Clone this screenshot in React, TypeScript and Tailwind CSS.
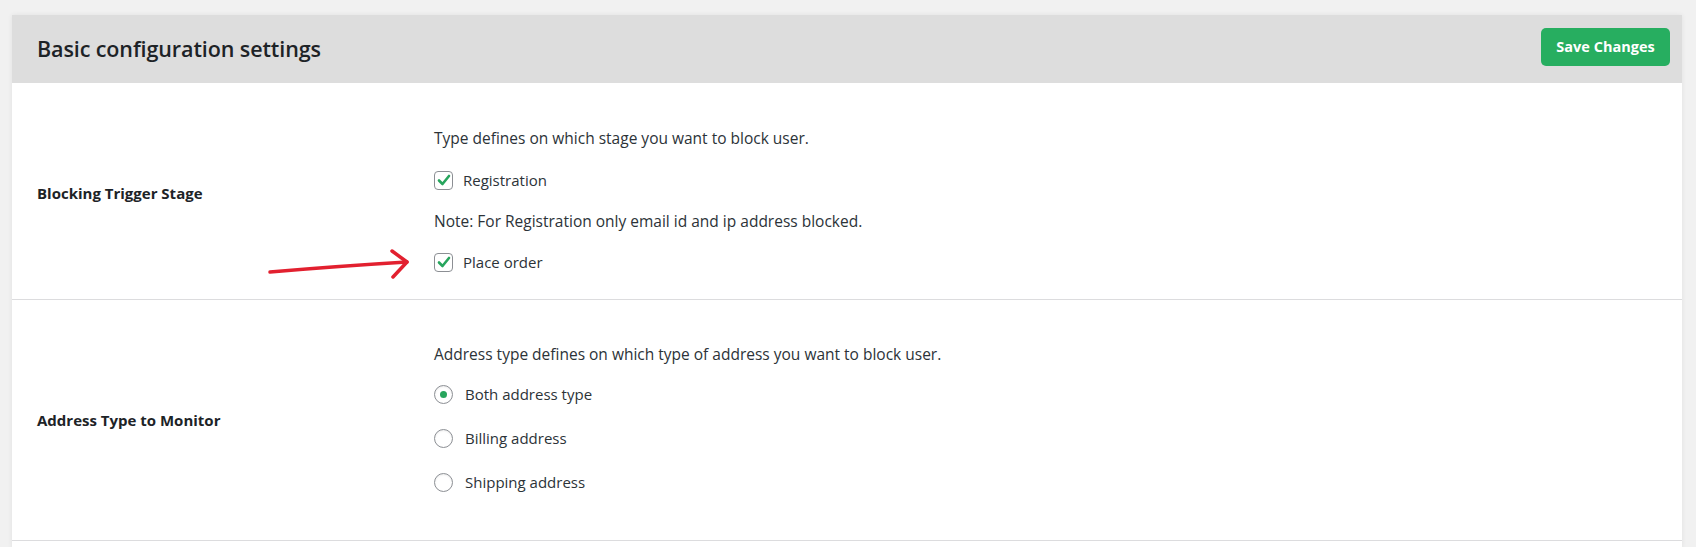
import React from "react";

type Option = { label: string; checked?: boolean };

const font = { fontFamily: '"Open Sans", "Noto Sans", sans-serif' };

function CheckBox({ label, checked }: Option) {
  return (
    <label className="flex items-center h-5 gap-[10px]">
      <span className="w-[19px] h-[19px] rounded-[4px] border border-[#8c8f94] bg-white flex items-center justify-center">
        {checked && (
          <svg width="14" height="14" viewBox="0 0 14 14">
            <path d="M2 7.5 L5.5 11 L12 3" fill="none" stroke="#27a55d" strokeWidth="2.6" strokeLinecap="round" strokeLinejoin="round" />
          </svg>
        )}
      </span>
      <span className="text-[15px] text-[#2c3338]">{label}</span>
    </label>
  );
}

function Radio({ label, checked }: Option) {
  return (
    <label className="flex items-center h-5 gap-[12px]">
      <span className="w-[19px] h-[19px] rounded-full border border-[#8c8f94] bg-white flex items-center justify-center shadow-[inset_0_1px_2px_rgba(0,0,0,0.08)]">
        {checked && <span className="w-[7px] h-[7px] rounded-full bg-[#27a55d]" />}
      </span>
      <span className="text-[15px] text-[#2c3338]">{label}</span>
    </label>
  );
}

// red annotation arrow pointing at "Place order"
function Arrow() {
  return (
    <svg className="absolute left-[248px] top-[161px]" width="160" height="40" viewBox="0 0 160 40">
      <path d="M10 28 Q80 22 147 18" fill="none" stroke="#e2202f" strokeWidth="3.5" strokeLinecap="round" />
      <path d="M132 7 L147 18 L133 33" fill="none" stroke="#e2202f" strokeWidth="3.5" strokeLinecap="round" strokeLinejoin="round" />
    </svg>
  );
}

export default function App() {
  return (
    <div className="min-h-[547px] bg-[#f1f1f1] pt-[15px] pl-[12px] pr-[14px]" style={font}>
      <div className="bg-white shadow-[0_0_5px_rgba(0,0,0,0.07)]">
        {/* header */}
        <div className="h-[68px] bg-[#dddddd] flex items-center justify-between pl-[25px] pr-[12px]">
          <h1 className="text-[21.5px] font-semibold text-[#1d2327] tracking-[-0.1px] mt-[1px]">Basic configuration settings</h1>
          <button className="w-[129px] h-[38px] rounded-[5px] bg-[#27ae60] text-white text-[14.5px] font-bold -mt-[4px]">
            Save Changes
          </button>
        </div>

        {/* row 1 */}
        <div className="relative flex border-b border-[#dcdcde]">
          <div className="w-[422px] pl-[25px] flex items-center shrink-0">
            <span className="text-[15px] font-bold text-[#1d2327] mt-[4px]">Blocking Trigger Stage</span>
          </div>
          <div className="pt-[45px] pb-[27px] flex flex-col gap-[21px] text-[#2c3338]">
            <p className="text-[15.5px] leading-5 mb-[1px]">Type defines on which stage you want to block user.</p>
            <CheckBox label="Registration" checked />
            <p className="text-[15.5px] leading-5">Note: For Registration only email id and ip address blocked.</p>
            <CheckBox label="Place order" checked />
          </div>
          <Arrow />
        </div>

        {/* row 2 */}
        <div className="flex border-b border-[#dcdcde]">
          <div className="w-[422px] pl-[25px] flex items-center shrink-0">
            <span className="text-[15px] font-bold text-[#1d2327]">Address Type to Monitor</span>
          </div>
          <div className="pt-[44px] pb-[48px] flex flex-col text-[#2c3338]">
            <p className="text-[15.5px] leading-5 mb-[20px]">Address type defines on which type of address you want to block user.</p>
            <div className="flex flex-col gap-[24px]">
              <Radio label="Both address type" checked />
              <Radio label="Billing address" />
              <Radio label="Shipping address" />
            </div>
          </div>
        </div>
        <div className="h-[8px]" />
      </div>
    </div>
  );
}
